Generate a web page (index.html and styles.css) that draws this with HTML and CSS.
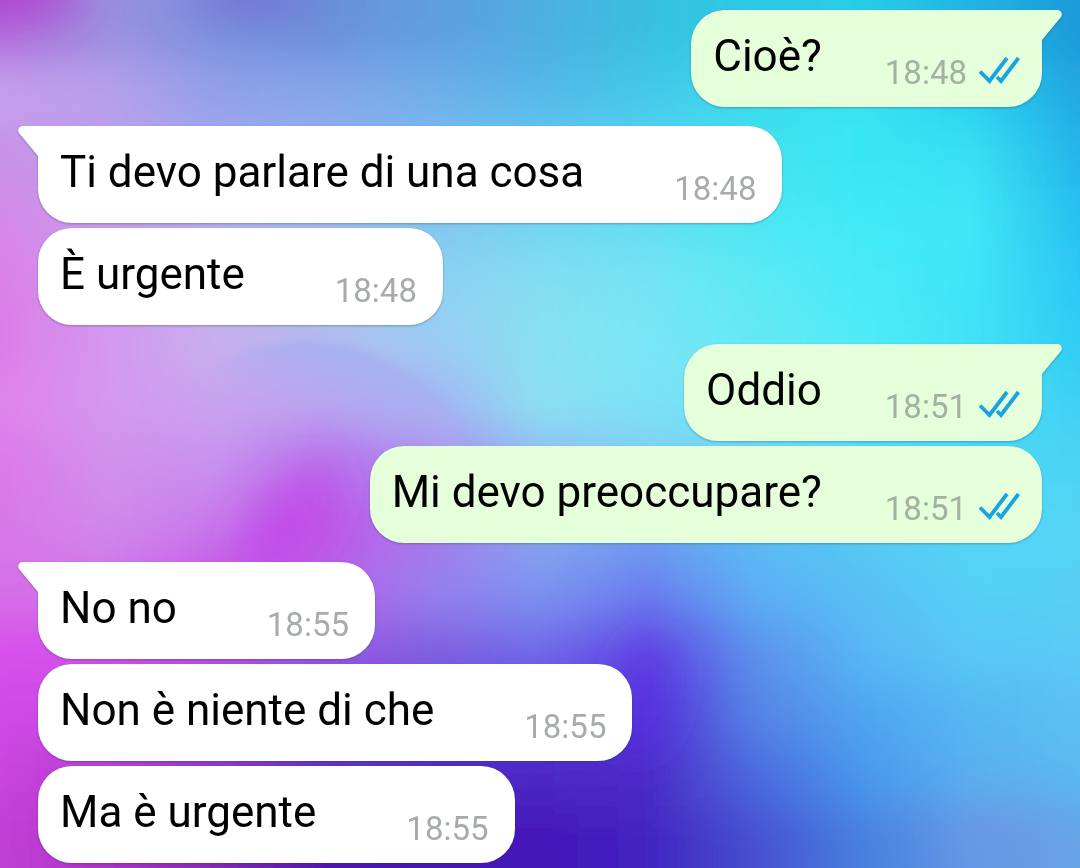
FILE: index.html
```html
<!DOCTYPE html>
<html lang="it">
<head>
<meta charset="utf-8">
<meta name="viewport" content="width=device-width, initial-scale=1">
<title>Chat</title>
<link rel="stylesheet" href="styles.css">
</head>
<body>
<svg class="wallpaper" viewBox="0 0 1080 868" preserveAspectRatio="none" aria-hidden="true">
  <defs>
    <filter id="wash" filterUnits="userSpaceOnUse" x="-120" y="-120" width="1320" height="1110"><feGaussianBlur stdDeviation="10 24"/></filter>
    <filter id="haze" filterUnits="userSpaceOnUse" x="-120" y="-120" width="1320" height="1110"><feGaussianBlur stdDeviation="26"/></filter>
    <filter id="edge" x="-20%" y="-20%" width="140%" height="140%"><feGaussianBlur stdDeviation="3"/></filter>
    <linearGradient id="cloud" x1="0.3" y1="0.9" x2="0.85" y2="0.15">
      <stop offset="0.4" stop-color="#b4a0f0" stop-opacity="0"/>
      <stop offset="0.9" stop-color="#a6b2f0" stop-opacity="0.95"/>
    </linearGradient>
  </defs>
  <g id="bands" filter="url(#wash)"></g>
  <g filter="url(#haze)">
    <ellipse cx="10" cy="-12" rx="70" ry="26" fill="#b038cc"/>
    <ellipse cx="250" cy="-8" rx="60" ry="18" fill="#7064cc"/>
    <ellipse cx="285" cy="525" rx="20" ry="70" fill="#c03ce8" transform="rotate(35 285 525)"/>
    <ellipse cx="645" cy="694" rx="22" ry="60" fill="#5830dc" fill-opacity="0.75" transform="rotate(12 645 694)"/>
    <ellipse cx="1000" cy="840" rx="50" ry="30" fill="#7098e4" fill-opacity="0.6"/>
  </g>
  <path d="M200 380C250 330 340 335 380 358C430 380 462 410 467 460L420 500L250 480Z" fill="url(#cloud)" filter="url(#edge)"/>
</svg>

<svg class="symbols" aria-hidden="true">
  <symbol id="tail" viewBox="0 0 20 30"><path d="M0 0H15C19 0 21 4 19 7L0 30Z"/></symbol>
  <symbol id="ticks" viewBox="0 0 42 28"><path d="M2 15.500L11.500 25L29 2M19 21L23 25L40.500 2" fill="none" stroke="currentColor" stroke-width="3.800"/></symbol>
</svg>

<main class="chat">
  <section class="group sent">
    <article class="bubble"><svg class="tail" aria-hidden="true"><use href="#tail"/></svg><p class="text">Cioè?</p><time class="time">18:48</time><svg class="ticks" role="img" aria-label="Letto"><use href="#ticks"/></svg></article>
  </section>
  <section class="group received">
    <article class="bubble"><svg class="tail" aria-hidden="true"><use href="#tail"/></svg><p class="text">Ti devo parlare di una cosa</p><time class="time">18:48</time></article>
    <article class="bubble"><p class="text">È urgente</p><time class="time">18:48</time></article>
  </section>
  <section class="group sent">
    <article class="bubble"><svg class="tail" aria-hidden="true"><use href="#tail"/></svg><p class="text">Oddio</p><time class="time">18:51</time><svg class="ticks" role="img" aria-label="Letto"><use href="#ticks"/></svg></article>
    <article class="bubble"><p class="text">Mi devo preoccupare?</p><time class="time">18:51</time><svg class="ticks" role="img" aria-label="Letto"><use href="#ticks"/></svg></article>
  </section>
  <section class="group received">
    <article class="bubble"><svg class="tail" aria-hidden="true"><use href="#tail"/></svg><p class="text">No no</p><time class="time">18:55</time></article>
    <article class="bubble"><p class="text">Non è niente di che</p><time class="time">18:55</time></article>
    <article class="bubble"><p class="text">Ma è urgente</p><time class="time">18:55</time></article>
  </section>
</main>
<script src="wallpaper.js"></script>
</body>
</html>
```

FILE: styles.css
```css
* {
  box-sizing: border-box;
}

body {
  margin: 0;
  min-height: 100vh;
  overflow-x: hidden;
  font-family: Roboto, "Noto Sans", sans-serif;
  background: #6cc4f0;
}

.wallpaper {
  position: fixed;
  inset: 0;
  z-index: -1;
  width: 100%;
  height: 100%;
}

.symbols {
  position: absolute;
  width: 0;
  height: 0;
}

.chat {
  display: flex;
  flex-direction: column;
  gap: 19px;
  padding: 10px 38px 5px;
}

.group {
  display: flex;
  flex-direction: column;
  gap: 5px;
}

.received {
  align-items: flex-start;
  color: #fff;
}

.sent {
  align-items: flex-end;
  color: #e6ffdb;
}

.bubble {
  position: relative;
  display: flex;
  align-items: flex-end;
  min-height: 97px;
  padding: 16px 26px 16px 22px;
  border-radius: 34px;
  background: currentColor;
  filter: drop-shadow(0 1px 1px rgb(20 60 90 / 35%));
}

.sent .bubble {
  padding-right: 22px;
}

.received .bubble:has(.tail) {
  border-top-left-radius: 0;
}

.sent .bubble:has(.tail) {
  border-top-right-radius: 0;
}

.tail {
  position: absolute;
  top: 0;
  left: 100%;
  width: 20px;
  height: 30px;
  fill: currentColor;
}

.received .tail {
  left: auto;
  right: 100%;
  transform: scaleX(-1);
}

.text {
  align-self: flex-start;
  margin: 0 90px 0 0;
  font-size: 44px;
  line-height: 60px;
  color: #000;
}

.sent .text {
  margin-right: 63px;
}

.time {
  font-size: 33px;
  line-height: 36px;
  color: #a8abae;
}

.sent .time {
  min-width: 82px;
  color: #a3b0a2;
}

.ticks {
  width: 42px;
  height: 28px;
  margin: 0 0 7px 11px;
  color: #18a4e0;
}
```

FILE: wallpaper.js
```js
// Each row holds evenly spaced colours, left to right.
const rows = [
  "b070dc 9a90e0 7c93e0 6b90dc 5f9ee0 4eaee0 38c0e2 2ccae4 28cde6 22b4e4 1c9ad8",
  "c8a0f0 b8a0ea 92a0ea 86a6ea 70aeea 54b8ea 44c8ea 38dcea 38e4f2 28d0f0 20a8e0",
  "c890e4 bca0ea a4a8ee 94b0ee 7cbcf0 66c8f0 58d4f0 44e2f0 38e6f2 38e0f4 26b4ea",
  "d488e8 c89cea b4acee a0b8f0 84c4f0 70d4f2 60def4 4ce6f4 40eaf6 40e6f6 28c0f0",
  "dc80e8 d096ec c0acee a8bcf0 8cd0f2 84def2 74e4f4 5ceaf4 48eaf6 40e4f8 2cc8f4",
  "dc7ce8 d498ee c8b0ee b4bcf0 9cccf4 88e0f2 78e6f6 64e8f4 50ecf6 40e2f6 30ccf4",
  "e084ec d498ee c8a4ee bca4ee a4b4f2 8ce0f2 7ce2f6 6ce4f4 58e4f6 48dcf6 40d0f4",
  "dc78ea d290ea c890ee b874ec b080f0 90b8f2 80ccf4 6cd4f4 58d8f4 4cd8f6 4cd4f4",
  "d878ea d088ea c878ec c058e8 a878ea 88a8f0 6ca0f0 5cbcf4 54ccf4 54d6f6 54d4f4",
  "d870e8 d070ea c850e6 b860e8 9880ee 7c94f0 6c80f0 5cb0f4 58c0f4 56d0f8 58d0f4",
  "d850ec d050e8 b850e0 9858e4 8060e0 7068e8 6248e6 5c90ec 58b8f4 58c8f6 5acaf6",
  "d048e8 c848e0 a840d8 8038d0 6840d8 5c40dc 5430dc 5584e6 50a4f0 54b8f2 5cc0f4",
  "c844e0 b83cd0 8c38c8 6030c0 5028c4 4c28c4 4e2cc8 4c6ade 4a98ee 5cb0ee 5cb8f2",
  "c040d4 b030c8 8828b8 5018b0 4818b8 4414b8 4224c2 4650d0 4880e0 6498e4 68a4e8"
].map(row => row.split(" "));

const band = 62;
const margin = 100;

document.getElementById("bands").innerHTML = rows.map((colours, i) => {
  const first = i === 0;
  const last = i === rows.length - 1;
  const y = first ? -margin : i * band;
  const height = band + (first || last ? margin : 0);
  const stops = colours.map((c, n) =>
    `<stop offset="${n / (colours.length - 1)}" stop-color="#${c}"/>`).join("");
  return `<linearGradient id="band${i}" gradientUnits="userSpaceOnUse" x1="0" x2="1080" y1="0" y2="0">${stops}</linearGradient>
    <rect x="-100" y="${y}" width="1280" height="${height}" fill="url(#band${i})"/>`;
}).join("");
```
